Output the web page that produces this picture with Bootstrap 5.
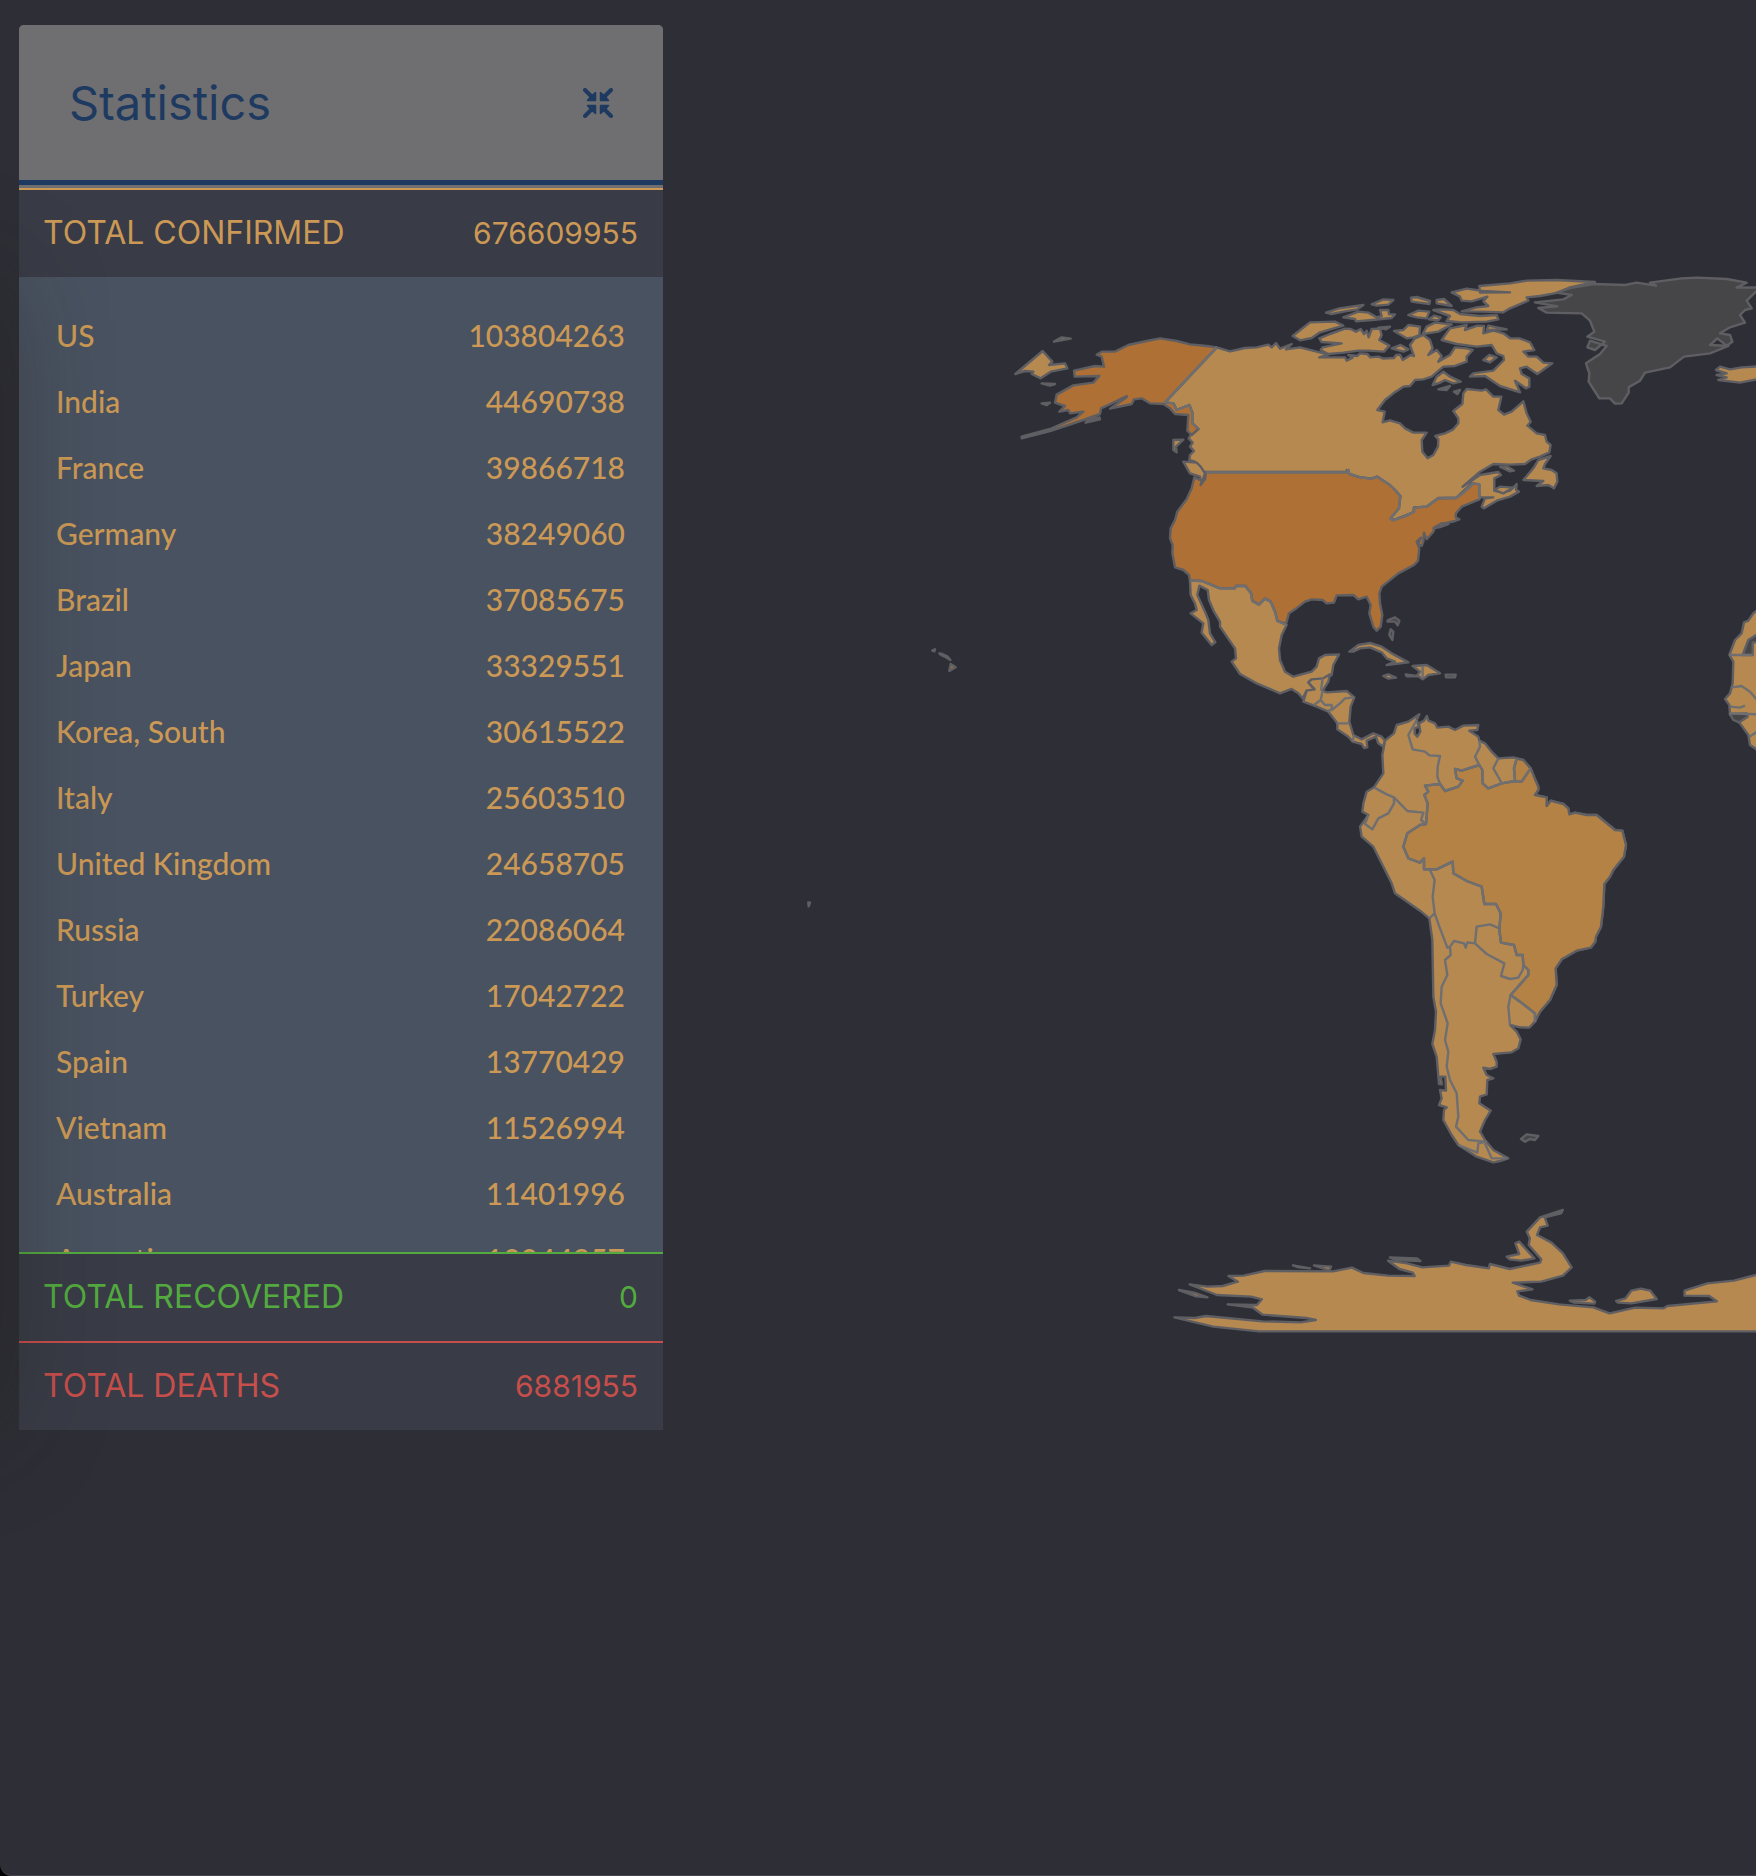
<!DOCTYPE html>
<html lang="en">
<head>
<meta charset="utf-8">
<meta name="viewport" content="width=device-width, initial-scale=1">
<title>Statistics</title>
<link href="https://cdn.jsdelivr.net/npm/bootstrap@5.3.0/dist/css/bootstrap.min.css" rel="stylesheet">
<style>
  html { background: #000; }
  body { background: transparent; font-family: Lato, sans-serif; }
  .screen { background: #2e2e36; min-height: 100vh; border-bottom: 1px solid #45444d; border-bottom-left-radius: 12px; }
  .edge-shade { left: -100px; top: 300px; width: 80px; height: 1110px; box-shadow: 0 0 110px 16px rgba(32, 28, 28, .45); pointer-events: none; z-index: 2; }
  .side { flex: 0 0 663px; padding: 25px 0 0 19px; }
  .panel-head { background: #6f6f71; border-bottom: 5px solid #1e3a61; border-radius: 5px 5px 0 0; height: 160px; padding: 0 50px; color: #1e3a61; margin-bottom: 3px; }
  .panel { background: #6f6f71; border-radius: 5px 5px 0 0; }
  .panel-title { font: 400 47px/56px Inter, sans-serif; }
  .collapse-btn { color: #1e3a61; line-height: 0; }
  .total { background: #393c46; border: 0; border-top: 2px solid currentColor; height: 89px; padding: 0 25px 2px 24px; font: 400 30px/36px Inter, sans-serif; }
  .total-label { font-size: 32px; }
  .tone-confirmed { color: #cb9955; }
  .tone-recovered { color: #53aa3f; }
  .tone-deaths { color: #c64e4b; }
  .country-list { background: #495260; height: 975px; padding: 25px 38px 0 37px; overflow: hidden; }
  .country-list th, .country-list td { height: 66px; padding: 0; font-size: 30px; line-height: 36px; font-weight: 500; vertical-align: middle; }
  .world { flex: 1 1 0; min-width: 0; }
  .world svg { width: 100%; height: auto; display: block; }
  .world path { vector-effect: non-scaling-stroke; stroke: #5f5f63; stroke-width: 2.4px; stroke-linejoin: round; fill: #b68950; }
  .world .hi { fill: #ae7034; }
  .world .mid { fill: #b38244; }
  .world .nodata { fill: #464548; }
  .world .border-line { fill: none; stroke: #6f6f71; }
</style>
<script src="https://cdn.jsdelivr.net/npm/bootstrap@5.3.0/dist/js/bootstrap.bundle.min.js"></script>
</head>
<body>
<div class="screen position-relative overflow-hidden d-flex align-items-start">
  <div class="edge-shade position-absolute"></div>
  <aside class="side">
    <div class="panel">
      <header class="panel-head d-flex align-items-center justify-content-between">
        <h1 class="panel-title m-0">Statistics</h1>
        <button type="button" class="collapse-btn btn p-0 border-0" aria-label="Collapse statistics">
          <svg width="30" height="30" viewBox="0 0 30 30" fill="currentColor" stroke="currentColor" stroke-linecap="round" stroke-linejoin="round" aria-hidden="true">
            <g id="arrow"><path stroke-width="4" d="M2 2 9 9"/><path stroke-width="1.500" d="M12.500 4.500V12.500H4.500L7 9.500 9.500 7Z"/></g>
            <use href="#arrow" transform="matrix(-1 0 0 1 30 0)"/>
            <use href="#arrow" transform="matrix(1 0 0 -1 0 30)"/>
            <use href="#arrow" transform="matrix(-1 0 0 -1 30 30)"/>
          </svg>
        </button>
      </header>
      <button type="button" class="total tone-confirmed w-100 d-flex align-items-center justify-content-between"><span class="total-label">TOTAL CONFIRMED</span><span>676609955</span></button>
      <div class="country-list tone-confirmed">
        <table class="w-100">
          <tbody>
            <tr><th scope="row">US</th><td class="text-end">103804263</td></tr>
            <tr><th scope="row">India</th><td class="text-end">44690738</td></tr>
            <tr><th scope="row">France</th><td class="text-end">39866718</td></tr>
            <tr><th scope="row">Germany</th><td class="text-end">38249060</td></tr>
            <tr><th scope="row">Brazil</th><td class="text-end">37085675</td></tr>
            <tr><th scope="row">Japan</th><td class="text-end">33329551</td></tr>
            <tr><th scope="row">Korea, South</th><td class="text-end">30615522</td></tr>
            <tr><th scope="row">Italy</th><td class="text-end">25603510</td></tr>
            <tr><th scope="row">United Kingdom</th><td class="text-end">24658705</td></tr>
            <tr><th scope="row">Russia</th><td class="text-end">22086064</td></tr>
            <tr><th scope="row">Turkey</th><td class="text-end">17042722</td></tr>
            <tr><th scope="row">Spain</th><td class="text-end">13770429</td></tr>
            <tr><th scope="row">Vietnam</th><td class="text-end">11526994</td></tr>
            <tr><th scope="row">Australia</th><td class="text-end">11401996</td></tr>
            <tr><th scope="row">Argentina</th><td class="text-end">10044957</td></tr>
          </tbody>
        </table>
      </div>
      <button type="button" class="total tone-recovered w-100 d-flex align-items-center justify-content-between"><span class="total-label">TOTAL RECOVERED</span><span>0</span></button>
      <button type="button" class="total tone-deaths w-100 d-flex align-items-center justify-content-between"><span class="total-label">TOTAL DEATHS</span><span>6881955</span></button>
    </div>
  </aside>
  <main class="world">
    <svg viewBox="663 0 1093 1875" role="img" aria-label="World map of confirmed cases">
      <!-- Canada, Greenland and the Arctic islands -->
      <g transform="translate(1280 260) scale(.333333)">
        <path d="M-190 262-150 274-105 264-70 262-35 254-25 262-12 249 0 266 35 252 18 268 60 262 110 275 145 284 118 292 195 292 200 302 218 293 205 285 232 288 240 280 262 282 270 292 295 290 310 296 342 294 348 285 360 284 368 300 392 285 402 288 390 255 405 235 430 225 450 240 458 265 445 285 470 270 485 288 475 305 510 285 525 262 560 265 578 270 560 290 560 305 525 318 490 320 455 350 430 358 405 360 390 378 370 380 340 400 315 420 292 450 314 455 308 487 330 481 360 490 375 505 400 518 440 518 425 540 427 575 443 595 460 585 474 560 475 538 466 528 495 520 520 508 535 490 535 475 520 453 547 432 550 400 560 387 605 392 618 388 640 410 664 410 655 450 672 464 695 455 730 424 740 460 752 485 742 497 770 520 795 525 800 545 812 555 808 577 780 590 755 598 735 612 690 614 640 612 600 635 548 680 600 645 655 636 663 645 643 655 643 692 665 698 690 692 710 672 708 690 717 695 690 710 650 722 612 745 605 740 615 715 640 712 598 712 595 680 575 670 530 712 475 714 440 740 402 742 400 757 340 780 332 775 355 745 361 708 345 690 292 650 275 655 240 652 205 641 200 630 200 636-228 636-255 605-272 600-270 585-258 573-270 560-262 548-274 535-268 525-245 507-262 492-262 460-272 435-310 450-320 430-345 427Z"/>
        <path d="M38 228 90 187 165 185 190 197 120 217 95 234 60 241ZM118 235 150 222 195 206 212 207 228 215 242 207 252 222 260 212 266 232 275 207 300 206 305 225 298 240 328 257 312 275 265 272 235 272 190 278 145 282 122 270 128 262 185 250 125 246Z"/>
        <path d="M138 158 178 145 250 135 232 148 190 155 155 162ZM190 172 235 155 265 158 290 172 305 168 300 150 325 150 327 163 345 163 335 174 275 180 228 184 225 177ZM275 133 310 118 340 120 325 134 290 137ZM393 113 410 111 450 123 448 132 395 125ZM470 120 492 117 515 138 470 130ZM385 165 415 152 448 155 440 175 410 172ZM447 178 462 167 482 172 475 181ZM342 213 370 210 385 195 420 200 418 225 400 232 380 235ZM428 222 440 200 465 188 515 193 475 215ZM335 265 362 255 385 268 370 275ZM295 203 330 200 318 208ZM480 148 520 150 540 162 600 168 650 165 655 178 620 185 545 187 500 183 510 168 460 150Z"/>
        <path d="M515 97 560 86 610 93 690 97 600 98 598 78 690 70 740 62 830 60 945 66 870 82 835 98 780 108 740 112 745 122 690 145 670 157 610 155 545 154 590 142 625 138 610 124 622 110 575 124 545 122 540 110Z" style="fill-rule:nonzero"/>
        <path d="M485 240 510 205 560 195 555 210 592 197 612 198 610 220 640 212 670 220 690 235 718 235 750 247 763 270 730 275 745 290 770 290 790 308 817 310 772 342 740 320 720 325 725 342 748 355 748 380 738 385 705 362 720 397 660 378 615 348 570 350 580 340 640 332 672 300 670 288 650 280 635 255 590 260 530 252ZM610 300 628 285 650 292 630 307ZM620 210 625 197 680 208ZM458 375 470 350 490 335 510 350 542 365 520 370 495 360 480 368ZM475 388 510 378 500 390ZM522 395 540 390 532 402Z"/>
        <path d="M730 660 760 625 775 600 812 588 795 612 790 625 815 630 830 640 832 665 822 685 805 675 770 678 790 663ZM660 620 680 619 702 632 690 634Z"/>
        <path d="M-290 605-250 608-238 620-225 640-237 675-240 650-270 640ZM-320 540-290 539-312 560-310 577-320 570ZM643 690 660 680 700 683 670 700Z"/>
        <path class="nodata" d="M830 98 875 105 850 118 765 127 832 139 775 144 800 158 905 160 930 182 943 215 922 230 975 245 945 270 922 262 930 242 980 258 960 282 918 310 928 340 926 365 958 415 990 415 1005 431 1025 430 1046 398 1046 382 1080 362 1095 338 1170 322 1212 290 1290 280 1345 258 1290 255 1312 235 1340 257 1357 245 1350 225 1320 220 1350 202 1395 188 1380 165 1395 150 1415 145 1400 122 1428 95 1450 82 1370 83 1400 68 1340 57 1250 53 1205 55 1110 68 1128 77 1070 68 1035 75 940 72 870 84Z"/>
        <path d="M1460 352 1380 368 1315 360 1340 352 1310 345 1340 340 1308 330 1320 320 1350 328 1385 322 1460 318Z"/>
      </g>
      <!-- Alaska and the eastern tip of Russia -->
      <g transform="translate(1000 260) scale(.333333)">
        <path class="hi" d="M650 262 620 258 570 253 530 243 480 235 440 243 385 255 345 275 305 275 290 284 305 290 312 320 285 318 222 332 224 350 298 348 280 368 220 376 170 404 165 428 195 438 178 455 205 450 210 460 250 455 230 472 150 507 65 530 65 535 150 513 250 480 300 462 303 445 340 428 380 408 380 412 330 446 395 432 402 418 425 415 450 430 490 432 510 445 525 462 565 465 562 512 575 525 595 507 578 490 578 460 568 435 530 450 520 430 495 427ZM257 488 265 480 298 472 300 478Z"/>
        <path d="M46 342 128 273 157 305 147 315 195 310 202 325 152 335 122 355 95 342 100 335 75 333ZM162 245 185 232 212 236ZM125 370 165 372 150 377ZM125 430 150 428 140 435Z"/>
        <path class="border-line" d="M650 262 495 427 520 430 530 450 568 435 578 460 578 490 595 507"/>
      </g>
      <!-- United States, Mexico and the Caribbean -->
      <g transform="translate(1140 440) scale(.333333)">
        <path class="hi" d="M198 97H620L625 90 628 102 660 112 695 116 712 110 750 135 765 150 781 168 777 205 752 235 757 241 800 227 822 215 822 203 860 200 895 175 948 174 968 160 1000 130 1018 133 1018 178 965 200 948 220 947 232 958 238 945 243 905 252 885 262 880 275 860 298 852 278 850 305 845 318 835 312 843 293 830 305 838 325 834 362 822 375 775 400 725 440 718 460 720 490 727 525 722 560 710 572 700 560 688 520 692 495 680 470 655 478 640 465 590 466 582 488 560 490 548 480 515 478 495 485 465 508 447 520 438 552 412 543 405 515 392 485 375 476 357 494 337 483 333 460 316 438 288 438 284 445 240 445 185 423 150 422 147 405 130 390 105 382 97 340 98 315 90 295 92 265 105 240 112 215 140 178 155 145 163 112 185 122 182 135 195 118Z"/>
        <path d="M880 265 905 250 925 252 900 261Z"/>
        <path d="M150 422 185 423 240 445 284 445 288 438 316 438 333 460 337 483 357 494 375 476 392 485 405 515 412 543 440 555 425 585 417 625 420 660 435 695 460 710 515 695 530 680 537 655 555 645 597 643 580 675 575 705 550 718 515 718 505 727 524 750 500 752 488 775 475 760 455 747 420 760 350 730 300 702 275 665 288 655 285 625 240 560 240 545 222 515 207 480 203 450 178 437 172 465 195 515 205 540 210 580 226 607 215 615 185 578 190 550 152 520 170 510 165 490 152 465Z"/>
        <path d="M628 635 655 615 690 609 725 620 755 640 805 667 740 675 765 665 740 655 725 637 690 622 660 625 640 635ZM730 708 745 703 768 713 745 716ZM797 703 830 708 840 695 818 678 860 675 900 700 865 705 848 718 835 708 800 709Z"/>
        <path class="nodata" d="M917 704 947 704 945 712 918 712ZM743 541 765 532 778 542 773 556 765 545 743 545ZM752 568 760 575 757 600 748 585Z"/>
        <path class="border-line" d="M848 678V715M198 97H620L625 90 628 102 660 112 695 116 712 110 750 135 765 150 781 168 777 205 752 235 757 241 800 227 822 215 822 203 860 200 895 175 948 174 968 160 1000 130 1018 133 1018 178M150 422 185 423 240 445 284 445 288 438 316 438 333 460 337 483 357 494 375 476 392 485 405 515 412 543 440 555"/>
      </g>
      <!-- Central America -->
      <g transform="translate(1240 640) scale(.333333)">
        <path d="M215 118 250 115 270 103 265 125 248 152 260 157 320 153 343 172 332 200 328 245 340 285 365 298 400 280 425 290 435 302 430 320 415 310 408 290 380 302 382 322 372 324 365 312 338 305 325 290 292 268 292 250 265 215 230 200 190 185 200 152 224 148 205 127Z"/>
        <path class="border-line" d="M248 152 242 180 222 195M242 180 255 195 275 195 275 210 300 190 315 175 343 172M275 210 262 212M290 250H328M338 305 342 285M248 115 243 152"/>
      </g>
      <!-- South America -->
      <g transform="translate(1320 680) scale(.333333)">
        <path d="M195 182 222 160 230 135 265 125 298 103 290 120 297 140 284 145 284 162 292 170 301 155 297 130 312 122 321 108 325 122 345 130 352 143 385 140 405 150 430 137 475 135 472 150 448 152 475 170 478 182 495 190 515 215 535 235 580 232 610 240 632 265 642 290 655 320 655 330 645 345 680 352 680 378 692 362 730 372 745 385 748 403 765 398 800 405 830 405 885 450 907 452 918 495 912 530 880 570 870 590 853 612 850 680 843 740 828 770 826 785 812 803 770 812 725 838 707 865 710 915 690 960 660 995 645 1025 628 1043 600 1042 570 1035 590 1055 602 1078 595 1105 575 1117 520 1122 530 1145 530 1160 510 1167 490 1163 500 1185 520 1195 502 1200 500 1243 480 1250 478 1270 512 1292 495 1320 480 1355 495 1380 520 1410 565 1435 540 1443 520 1447 470 1430 415 1395 395 1365 370 1320 372 1290 380 1282 357 1275 365 1255 360 1230 378 1232 376 1190 362 1190 366 1213 357 1212 350 1130 337 1092 345 1050 348 995 340 950 337 780 328 715 300 692 225 640 215 610 160 500 125 470 120 440 145 405 127 395 130 370 140 335 162 322 190 280 187 225Z"/>
        <path class="mid" d="M632 265 642 290 655 320 655 330 645 345 680 352 680 378 692 362 730 372 745 385 748 403 765 398 800 405 830 405 885 450 907 452 918 495 912 530 880 570 870 590 853 612 850 680 843 740 828 770 826 785 812 803 770 812 725 838 707 865 710 915 690 960 660 995 645 1025 645 1000 600 965 572 945 625 885 625 870 610 855 608 825 590 825 582 795 543 788 538 750 542 700 528 672 493 672 485 620 440 603 400 580 398 545 350 568 312 568 312 535 300 548 265 535 250 500 262 460 300 435 318 432 323 370 313 345 325 335 315 317 360 312 375 333 415 320 428 302 410 295 405 267 425 272 478 255 487 270 488 310 505 325 545 310 585 303 605 305ZM590 236 610 240 632 265 605 305 585 303 582 265Z"/>
        <path class="border-line" d="M632 265 605 305 585 303 545 310 505 325 488 310 487 270 478 255 425 272 405 267 410 295 428 302 415 320 375 333 360 312 315 317 325 335 313 345 323 370 318 432 300 435 262 460 250 500 265 535 300 548 312 535 312 568 350 568 398 545 400 580 440 603 485 620 493 672 528 672 542 700 538 750 543 788 582 795 590 825 608 825 610 855 625 870 625 885 572 945 600 965 645 1000 645 1025"/>
        <path class="border-line" d="M290 120 265 165 278 208 315 215 328 226 360 228 353 260 352 290 360 312M478 182 480 200 465 230 478 255M535 235 520 265 540 300 545 310M590 236 582 265 585 303M162 322 200 343 222 352 222 370 205 400 175 415 157 448 135 432 145 405M222 352 262 393 310 398 303 420 318 432M330 570 344 600 338 650 344 700 328 715M344 700 358 740 382 803 390 800 392 825 375 840 382 885 365 920 362 970 383 1030 375 1080 385 1115 380 1160 390 1200 410 1240 415 1310 408 1340 445 1380 500 1385M390 800 402 783 432 790 437 803 442 787 465 790M465 790 470 740 510 733 538 745M465 790 500 822 553 850 543 888 570 897 595 893 608 870 610 855M572 945 565 980 570 1035M500 1385 475 1390 472 1418 415 1395M495 1390 515 1435 560 1435"/>
        <path class="nodata" d="M603 1377 620 1363 655 1368 645 1380 630 1377 615 1385Z"/>
      </g>
      <!-- Antarctica -->
      <g transform="translate(1160 1180) scale(.380100 .333333)">
        <path d="M260 454 140 440 38 412 92 414 120 408 270 424 370 427 410 420 385 414 270 404 245 383 178 373 255 375 268 358 240 350 150 345 78 313 125 320 165 318 205 305 180 288 220 287 275 273 455 274 505 263 535 279 600 287 670 288 665 278 630 267 600 242 650 250 690 262 760 257 765 245 805 255 865 265 868 252 920 267 1000 248 1003 238 970 195 973 175 965 155 1000 112 1060 90 1055 100 1012 112 1020 137 1000 142 992 165 1030 188 1060 220 1083 262 1060 287 1003 305 928 308 980 328 940 334 945 347 975 360 1050 373 1140 382 1183 400 1250 383 1325 385 1335 378 1465 364 1445 348 1380 347 1380 332 1440 310 1510 302 1568 285 1600 275V454Z"/>
        <path d="M912 230 945 222 935 190 945 185 985 235 950 242 920 238ZM50 330 90 338 125 352 95 349ZM605 232 675 235 685 243 620 240ZM350 256 395 265 365 262ZM405 256 450 260 445 271ZM1078 362 1120 360 1130 352 1145 365 1143 371 1090 368ZM1200 363 1225 355 1240 332 1265 326 1290 332 1307 357 1240 370 1205 368Z"/>
      </g>
      <!-- West Africa -->
      <g transform="translate(1680 560) scale(.333333)">
        <path d="M240 145 220 160 205 182 192 187 185 220 165 240 148 285 160 305 158 370 150 400 135 417 148 435 150 465 180 490 205 525 210 555 240 575Z"/>
        <path class="nodata" d="M240 218 205 240 188 285H218V247H240ZM150 462 200 460 203 470 178 487 160 480Z"/>
        <path class="border-line" d="M148 285H218M155 382 185 378 210 395 240 430M150 440 180 443 195 437M148 460 240 463M208 530 240 510"/>
      </g>
      <!-- Pacific islands -->
      <g transform="translate(795 640) scale(.333333)">
        <path class="hi" d="M467 72 482 82 463 93Z"/>
        <path class="nodata" d="M412 32 420 28 418 34ZM433 40 442 42 458 50 466 60 455 53 438 45ZM40 787 45 788 41 799Z"/>
      </g>
    </svg>
  </main>
</div>
</body>
</html>
